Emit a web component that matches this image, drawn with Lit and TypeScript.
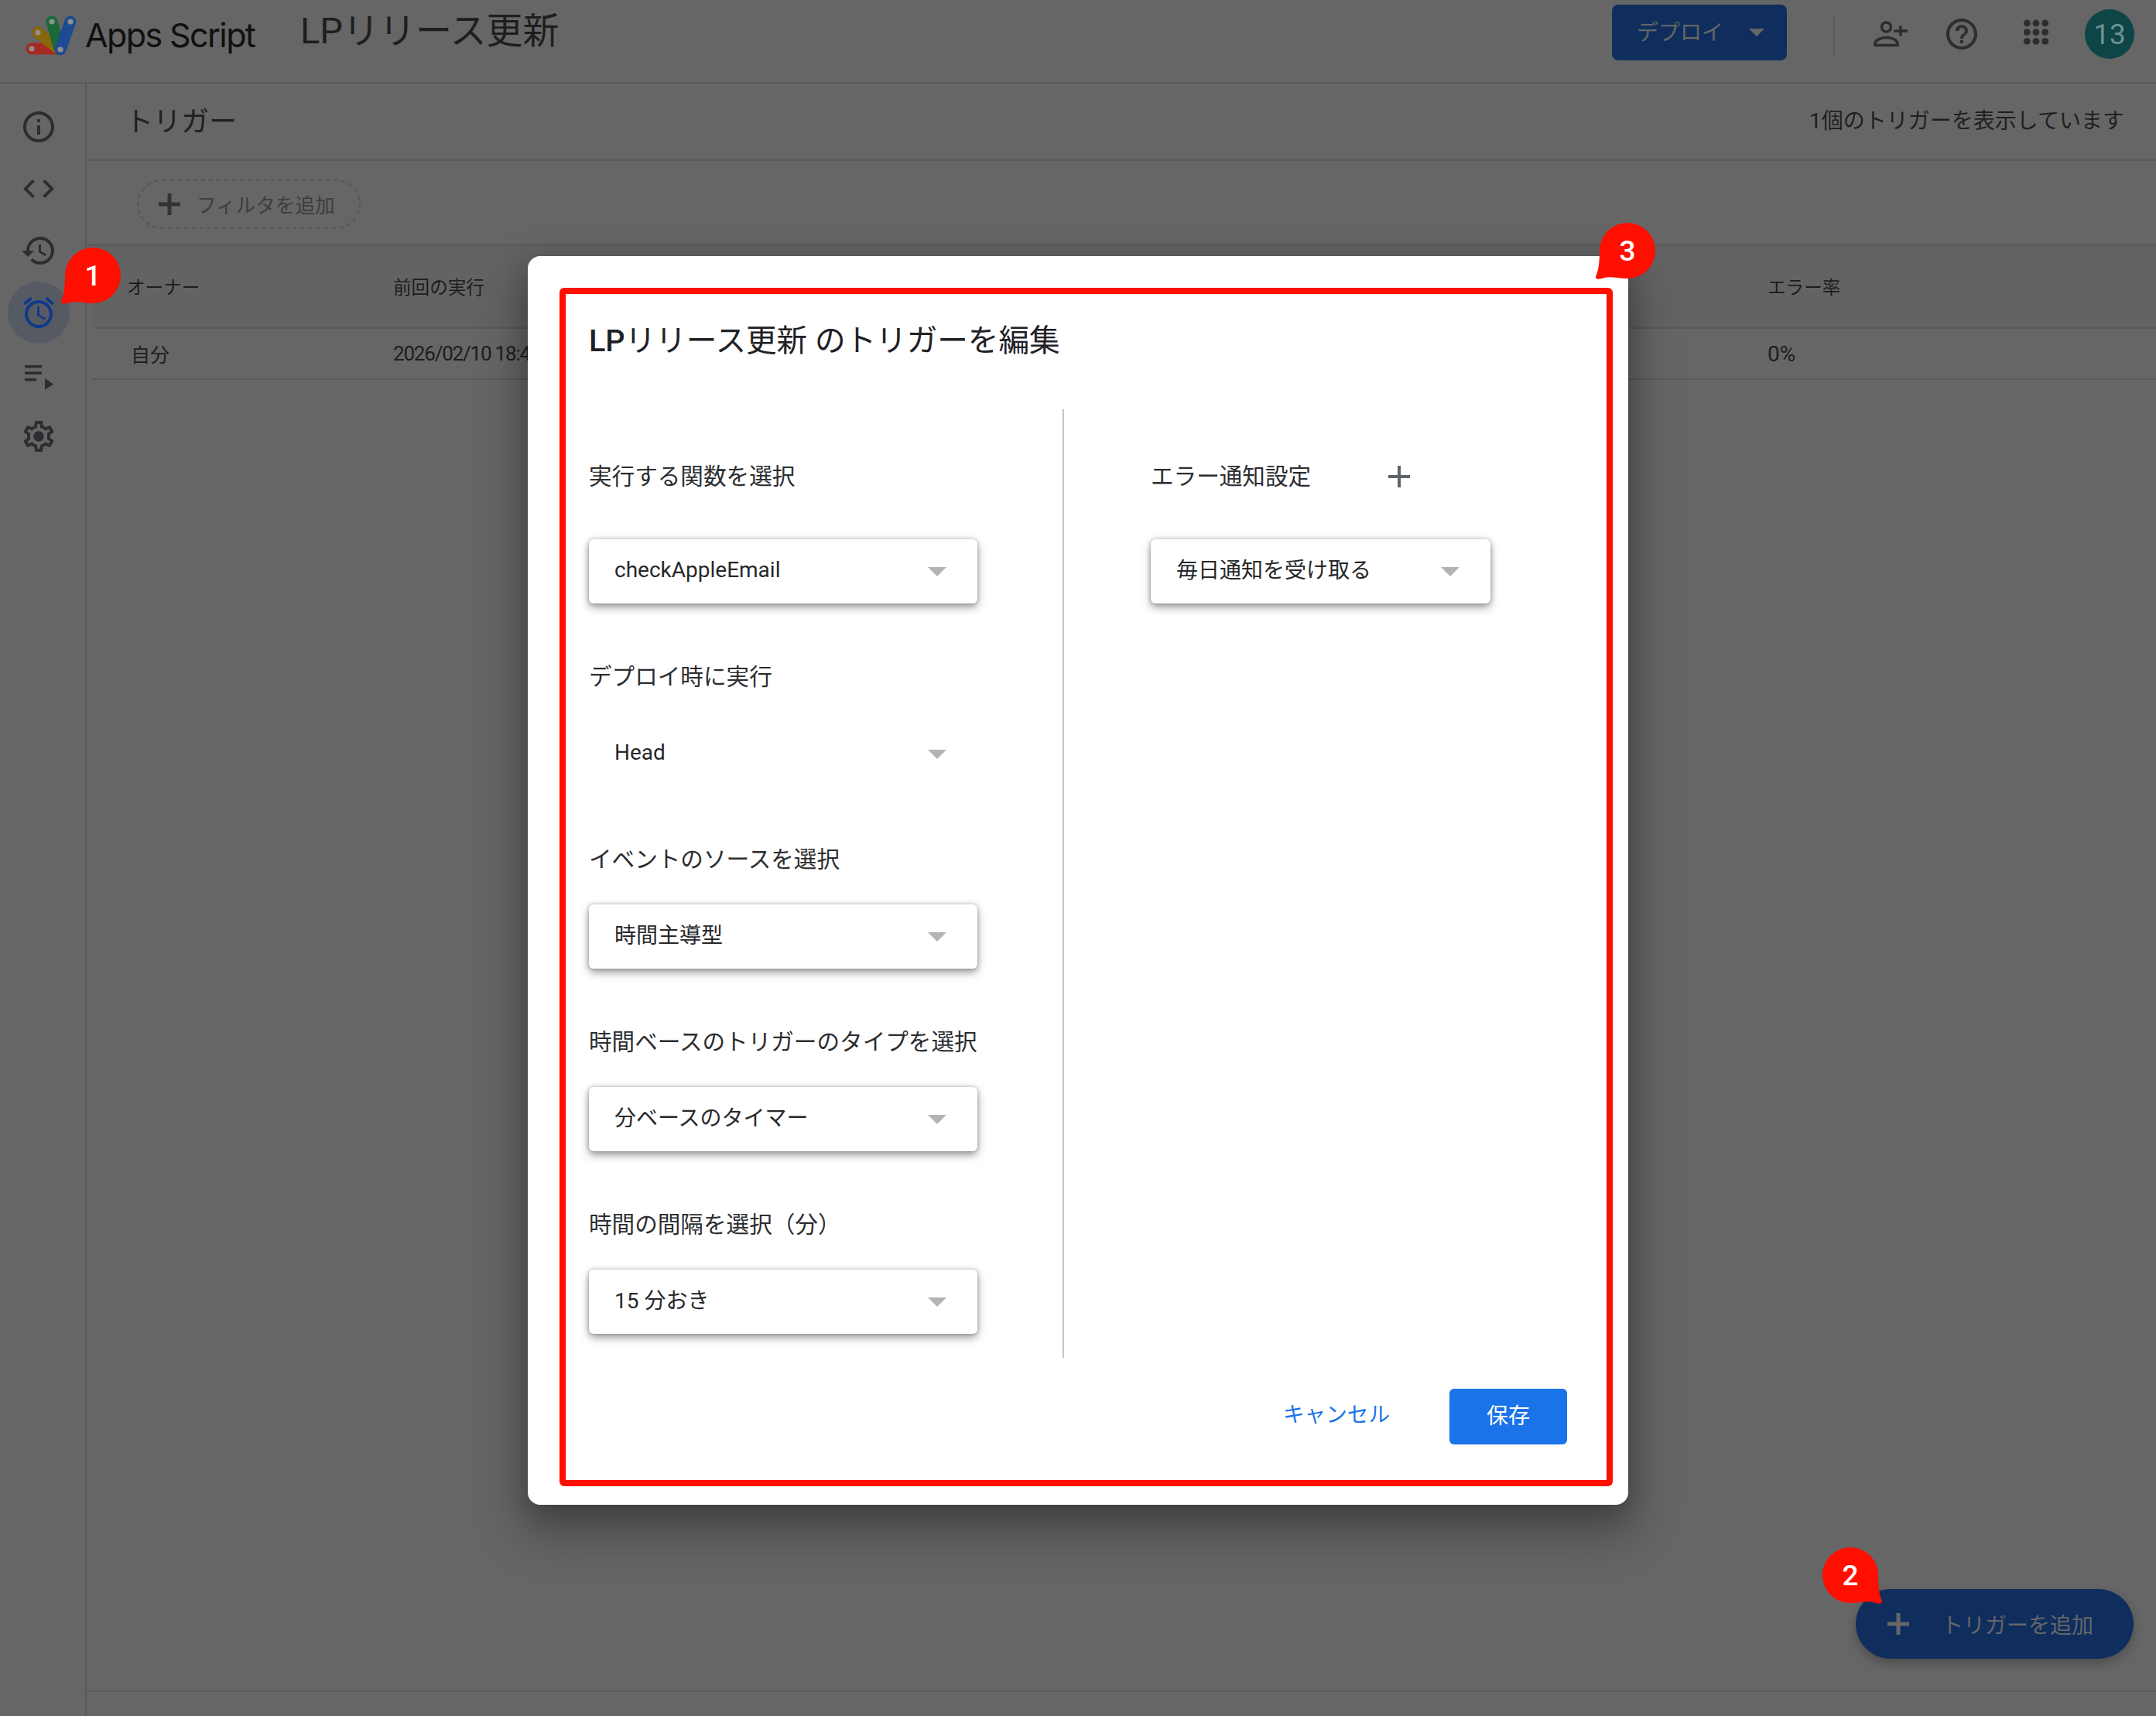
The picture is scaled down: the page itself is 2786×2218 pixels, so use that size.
import { html, css, LitElement, svg } from 'lit';
import { customElement } from 'lit/decorators.js';

const icon = (d: string, box = '0 0 24 24') => html`<svg viewBox=${box} width="48" height="48" fill="currentColor"><path d=${d}></path></svg>`;

const ICONS = {
  info: 'M11 7h2v2h-2zm0 4h2v6h-2zm1-9C6.48 2 2 6.48 2 12s4.48 10 10 10 10-4.48 10-10S17.52 2 12 2zm0 18c-4.41 0-8-3.59-8-8s3.59-8 8-8 8 3.59 8 8-3.59 8-8 8z',
  code: 'M9.4 16.6L4.8 12l4.6-4.6L8 6l-6 6 6 6 1.4-1.4zm5.2 0l4.6-4.6-4.6-4.6L16 6l6 6-6 6-1.4-1.4z',
  history: 'M13 3c-4.97 0-9 4.03-9 9H1l3.89 3.89.07.14L9 12H6c0-3.87 3.13-7 7-7s7 3.13 7 7-3.13 7-7 7c-1.93 0-3.68-.79-4.94-2.06l-1.42 1.42C8.27 19.99 10.51 21 13 21c4.97 0 9-4.03 9-9s-4.03-9-9-9zm-1 5v5l4.28 2.54.72-1.21-3.5-2.08V8H12z',
  alarm: 'M22 5.72l-4.6-3.86-1.29 1.53 4.6 3.86L22 5.72zM7.88 3.39L6.6 1.86 2 5.71l1.29 1.53 4.59-3.85zM12.5 8H11v6l4.75 2.85.75-1.23-4-2.37V8zM12 4c-4.97 0-9 4.03-9 9s4.03 9 9 9 9-4.03 9-9-4.03-9-9-9zm0 16c-3.87 0-7-3.13-7-7s3.13-7 7-7 7 3.13 7 7-3.13 7-7 7z',
  queue: 'M6 12h22v3.600H6zM6 20.500h22v3.600H6zM6 29h15v3.600H6zM32 29v15l11-7.500z',
  gear: 'M19.43 12.98c.04-.32.07-.64.07-.98s-.03-.66-.07-.98l2.11-1.65c.19-.15.24-.42.12-.64l-2-3.46c-.12-.22-.39-.3-.61-.22l-2.49 1c-.52-.4-1.08-.73-1.69-.98l-.38-2.65C14.46 2.18 14.25 2 14 2h-4c-.25 0-.46.18-.49.42l-.38 2.65c-.61.25-1.17.59-1.69.98l-2.49-1c-.23-.09-.49 0-.61.22l-2 3.46c-.13.22-.07.49.12.64l2.11 1.65c-.04.32-.07.65-.07.98s.03.66.07.98l-2.11 1.65c-.19.15-.24.42-.12.64l2 3.46c.12.22.39.3.61.22l2.49-1c.52.4 1.08.73 1.69.98l.38 2.65c.03.24.24.42.49.42h4c.25 0 .46-.18.49-.42l.38-2.65c.61-.25 1.17-.59 1.69-.98l2.49 1c.23.09.49 0 .61-.22l2-3.46c.12-.22.07-.49-.12-.64l-2.11-1.65zm-1.98-1.71c.04.31.05.52.05.73 0 .21-.02.43-.05.73l-.14 1.13.89.7 1.08.84-.7 1.21-1.27-.51-1.04-.42-.9.68c-.43.32-.84.56-1.25.73l-1.06.43-.16 1.13-.2 1.35h-1.4l-.19-1.35-.16-1.13-1.06-.43c-.43-.18-.83-.41-1.23-.71l-.91-.7-1.06.43-1.27.51-.7-1.21 1.08-.84.89-.7-.14-1.13c-.03-.31-.05-.54-.05-.74s.02-.43.05-.73l.14-1.13-.89-.7-1.08-.84.7-1.21 1.27.51 1.04.42.9-.68c.43-.32.84-.56 1.25-.73l1.06-.43.16-1.13.2-1.35h1.39l.19 1.35.16 1.13 1.06.43c.43.18.83.41 1.23.71l.91.7 1.06-.43 1.27-.51.7 1.21-1.07.85-.89.7.14 1.13zM12 8.6a3.4 3.4 0 1 0 0 6.8 3.4 3.4 0 0 0 0-6.8z',
  help: 'M11 18h2v-2h-2v2zm1-16C6.48 2 2 6.48 2 12s4.48 10 10 10 10-4.48 10-10S17.52 2 12 2zm0 18c-4.41 0-8-3.59-8-8s3.59-8 8-8 8 3.59 8 8-3.59 8-8 8zm0-14c-2.21 0-4 1.79-4 4h2c0-1.1.9-2 2-2s2 .9 2 2c0 2-3 1.75-3 5h2c0-2.25 3-2.5 3-5 0-2.21-1.79-4-4-4z',
};

const plus = (size: number, w: number) => html`<svg width=${size} height=${size} viewBox="0 0 28 28" fill="currentColor">
  <rect x=${14 - w / 2} y="0" width=${w} height="28"></rect><rect x="0" y=${14 - w / 2} width="28" height=${w}></rect>
</svg>`;

// annotation balloon, tail goes bottom-left unless flipped
const bubble = (n: number, cls: string) => html`<div class="bubble ${cls}">
  <svg viewBox="-44 -38 88 80" width="88" height="80"><path d="M0 -36A36 36 0 1 1 0 36C-12 36 -22 33 -30 35C-36 37 -42 38 -41 33C-37 26 -36 12 -36 0A36 36 0 0 1 0 -36Z"></path></svg>
  <span>${n}</span>
</div>`;

const logo = svg`
  <g fill="none" stroke-width="15" stroke-linecap="round">
    <path d="M41 63H76" stroke="#a32b22"></path>
    <path d="M49 42L74 62" stroke="#8a660c"></path>
    <path d="M67 28L76 60" stroke="#176a35"></path>
    <path d="M91 28L78 64" stroke="#1d4a92"></path>
  </g>
  <g fill="#8f8f8f">
    <circle cx="41" cy="63" r="3.6"></circle><circle cx="49" cy="42" r="3.6"></circle>
    <circle cx="67" cy="28" r="3.6"></circle><circle cx="91" cy="28" r="3.6"></circle><circle cx="78" cy="64" r="3.6"></circle>
  </g>`;

@customElement('app-root')
export class AppRoot extends LitElement {
  static styles = css`
    :host {
      display: block;
      position: relative;
      width: 2786px;
      height: 2218px;
      overflow: hidden;
      background: #666;
      color: #1c1c1c;
      font-family: Roboto, "Noto Sans CJK JP", sans-serif;
    }
    * { box-sizing: border-box; }

    .header {
      height: 108px;
      display: flex;
      align-items: center;
      border-bottom: 2px solid #5a5a5a;
      position: relative;
    }
    .logo { width: 110px; height: 106px; flex: none; }
    .brand {
      width: 278px;
      font: 400 43px Inter, Roboto, sans-serif;
      letter-spacing: -1.6px;
      color: #101010;
      padding-bottom: 16px;
    }
    .doc-title { font-size: 47px; color: #1e1e1e; padding-bottom: 36px; flex: 1; }
    .deploy {
      width: 226px;
      height: 72px;
      margin-bottom: 22px;
      border-radius: 8px;
      background: #0f2e5e;
      color: #666;
      display: flex;
      align-items: center;
      padding: 0 29px 0 32px;
      font-size: 28px;
      justify-content: space-between;
    }
    .deploy span { padding-bottom: 4px; }
    .caret { width: 0; height: 0; border-left: 12px solid transparent; border-right: 12px solid transparent; border-top: 12px solid #b3b3b3; }
    .deploy .caret { border-left-width: 10px; border-right-width: 10px; border-top-width: 10px; border-top-color: #666; }
    .vr { width: 2px; height: 53px; background: #5a5a5a; margin: 0 48px 16px 60px; }
    .tool { width: 48px; height: 48px; color: #2b2d30; margin-bottom: 18px; }
    .tool svg { display: block; }
    .help { margin-left: 44px; }
    .apps { margin-left: 48px; }
    .avatar {
      width: 64px;
      height: 64px;
      margin: 0 28px 18px 39px;
      border-radius: 50%;
      background: #0e4547;
      color: #6d9294;
      font-size: 37px;
      display: flex;
      align-items: center;
      justify-content: center;
    }

    .body { display: flex; height: 2110px; }
    .side {
      width: 112px;
      flex: none;
      border-right: 2px solid #5a5a5a;
      padding: 16px 0 0 10px;
      display: flex;
      flex-direction: column;
      align-items: flex-start;
      color: #2b2d30;
    }
    .side-item {
      width: 80px;
      height: 80px;
      flex: none;
      border-radius: 50%;
      display: flex;
      align-items: center;
      justify-content: center;
    }
    .side-item.on { background: #565b63; color: #10398a; }

    .main { flex: 1; display: flex; flex-direction: column; min-width: 0; }
    .sub {
      height: 100px;
      flex: none;
      padding: 0 41px 6px 50px;
      display: flex;
      align-items: center;
      justify-content: space-between;
      border-bottom: 2px solid #5a5a5a;
    }
    .sub h1 { margin: 0; font-size: 36px; font-weight: 400; color: #202020; }
    .sub span { font-size: 28px; color: #1f1f1f; }
    .filters {
      height: 110px;
      flex: none;
      padding: 24px 0 0 65px;
      border-bottom: 2px solid #5a5a5a;
    }
    .chip {
      width: 289px;
      height: 64px;
      border: 2px dashed #565656;
      border-radius: 32px;
      display: flex;
      align-items: center;
      gap: 21px;
      padding-left: 26px;
      color: #333;
      font-size: 25.6px;
    }
    .chip span { color: #3e3e3e; padding-bottom: 2px; }
    .table { margin-left: 8px; }
    .row {
      display: grid;
      grid-template-columns: 344px 1776px 1fr;
      align-items: center;
      border-bottom: 2px solid #5a5a5a;
      padding-left: 44px;
      font-size: 24px;
      color: #1d1d1d;
    }
    .row.head { height: 107px; background: #636363; font-size: 23.6px; padding-bottom: 2px; }
    .row.item { height: 66px; padding-left: 49px; grid-template-columns: 339px 1776px 1fr; padding-bottom: 0; font-size: 25px; }
    .row.item .date { font-size: 26px; letter-spacing: -1.2px; }
    .row.item .rate { font-size: 28px; }
    .grow { flex: 1; }
    .foot { height: 33px; flex: none; border-top: 2px solid #5a5a5a; }

    .fab {
      position: absolute;
      left: 2398px;
      top: 2054px;
      width: 359px;
      height: 90px;
      border-radius: 45px;
      background: #0f2e5e;
      color: #666;
      display: flex;
      align-items: center;
      padding-left: 41px;
      gap: 42px;
      font-size: 28px;
      box-shadow: 0 6px 14px rgba(0, 0, 0, .25);
    }

    .modal {
      position: absolute;
      left: 682px;
      top: 331px;
      width: 1422px;
      height: 1614px;
      padding: 41px 20px 24px 41px;
      background: #fff;
      border-radius: 16px;
      box-shadow: 0 30px 60px 10px rgba(0, 0, 0, .28), 0 10px 30px rgba(0, 0, 0, .18);
      color: #202124;
    }
    .frame {
      height: 100%;
      border: 8px solid #fe0f00;
      border-radius: 6px;
      display: flex;
      flex-direction: column;
    }
    .frame h2 {
      margin: 0;
      height: 149px;
      flex: none;
      padding: 38px 0 0 30px;
      font-size: 39.6px;
      line-height: 46px;
      font-weight: 400;
      color: #202124;
    }
    .frame h2 b { font-weight: 500; }
    .cols { display: flex; height: 1226px; flex: none; }
    .left { width: 644px; padding: 67px 0 0 30px; flex: none; border-right: 2px solid #c4c4c4; }
    .right { flex: 1; padding: 67px 0 0 112px; }
    .group { display: flex; flex-direction: column; gap: 40px; margin-bottom: 73px; }
    .group.first { gap: 61px; }
    .label { height: 40px; line-height: 40px; font-size: 29.6px; color: #2c2d30; display: flex; align-items: center; }
    .group:not(.first) .label { padding-top: 3px; }
    .label .add { margin-left: 100px; color: #5f6368; display: flex; }
    .field {
      height: 83px;
      width: 502px;
      border-radius: 6px;
      padding: 0 40px 0 33px;
      display: flex;
      align-items: center;
      justify-content: space-between;
      font-size: 28px;
      color: #27282b;
    }
    .field span { padding-bottom: 4px; }
    .field.jp span { padding-bottom: 7px; }
    .field.boxed { background: #fff; box-shadow: 0 5px 11px rgba(60, 64, 67, .5), 0 0 5px rgba(60, 64, 67, .35); }
    .field.narrow { width: 439px; }
    .actions {
      flex: 1;
      display: flex;
      justify-content: flex-end;
      padding: 40px 51px 0 0;
      gap: 77px;
    }
    .cancel { height: 72px; line-height: 68px; font-size: 27.6px; color: #1a73e8; }
    .save {
      width: 152px;
      height: 72px;
      border-radius: 6px;
      background: #1a73e8;
      color: #fff;
      font-size: 28px;
      display: flex;
      align-items: center;
      justify-content: center;
      padding-bottom: 6px;
    }

    .bubble { position: absolute; width: 88px; height: 80px; }
    .bubble svg { position: absolute; inset: 0; fill: #fe0f00; }
    .bubble span {
      position: absolute;
      inset: 0 0 4px 0;
      display: flex;
      align-items: center;
      justify-content: center;
      color: #fff;
      font: 500 37px Roboto, sans-serif;
    }
    .b1 { left: 76px; top: 318px; }
    .b2 { left: 2347px; top: 1998px; }
    .b2 svg { transform: scaleX(-1); }
    .b3 { left: 2059px; top: 286px; }
  `;

  field(text: string, boxed = true, narrow = false) {
    const jp = /[^\x00-\x7f]/.test(text);
    return html`<div class="field ${boxed ? 'boxed' : ''} ${narrow ? 'narrow' : ''} ${jp ? 'jp' : ''}"><span>${text}</span><i class="caret"></i></div>`;
  }

  render() {
    return html`
      <div class="header">
        <svg class="logo" viewBox="0 0 110 106">${logo}</svg>
        <div class="brand">Apps Script</div>
        <div class="doc-title">LPリリース更新</div>
        <div class="deploy"><span>デプロイ</span><i class="caret"></i></div>
        <div class="vr"></div>
        <div class="tool">
          <svg viewBox="0 0 48 48" width="48" height="48" fill="none" stroke="currentColor">
            <circle cx="18.5" cy="15" r="6" stroke-width="3.6"></circle>
            <path d="M4 38.500v-2c0-5 8-8 14.500-8s14.500 3 14.500 8v2z" stroke-width="3.6"></path>
            <path d="M28 20h18M37 13.500v13" stroke-width="3.6"></path>
          </svg>
        </div>
        <div class="tool help">${icon(ICONS.help)}</div>
        <div class="tool apps">
          <svg viewBox="0 0 48 48" width="48" height="48" fill="currentColor">
            ${[10, 21.7, 33.4].map(y => [12.3, 24, 35.7].map(x => svg`<circle cx=${x} cy=${y} r="4.4"></circle>`))}
          </svg>
        </div>
        <div class="avatar">13</div>
      </div>

      <div class="body">
        <nav class="side">
          <div class="side-item">${icon(ICONS.info)}</div>
          <div class="side-item">${icon(ICONS.code)}</div>
          <div class="side-item">${icon(ICONS.history)}</div>
          <div class="side-item on">${icon(ICONS.alarm)}</div>
          <div class="side-item">${icon(ICONS.queue, '0 0 48 48')}</div>
          <div class="side-item">${icon(ICONS.gear)}</div>
        </nav>
        <main class="main">
          <div class="sub"><h1>トリガー</h1><span>1個のトリガーを表示しています</span></div>
          <div class="filters">
            <div class="chip">${plus(28, 5)}<span>フィルタを追加</span></div>
          </div>
          <div class="table">
            <div class="row head"><div>オーナー</div><div>前回の実行</div><div>エラー率</div></div>
            <div class="row item"><div>自分</div><div class="date">2026/02/10 18:45</div><div class="rate">0%</div></div>
          </div>
          <div class="grow"></div>
          <div class="foot"></div>
        </main>
      </div>

      <div class="fab">${plus(28, 5)}<span>トリガーを追加</span></div>

      <section class="modal">
        <div class="frame">
          <h2><b>LP</b>リリース更新 のトリガーを編集</h2>
          <div class="cols">
            <div class="left">
              <div class="group first"><div class="label">実行する関数を選択</div>${this.field('checkAppleEmail')}</div>
              <div class="group"><div class="label">デプロイ時に実行</div>${this.field('Head', false)}</div>
              <div class="group"><div class="label">イベントのソースを選択</div>${this.field('時間主導型')}</div>
              <div class="group"><div class="label">時間ベースのトリガーのタイプを選択</div>${this.field('分ベースのタイマー')}</div>
              <div class="group"><div class="label">時間の間隔を選択（分）</div>${this.field('15 分おき')}</div>
            </div>
            <div class="right">
              <div class="group first">
                <div class="label">エラー通知設定<span class="add">${plus(28, 4)}</span></div>
                ${this.field('毎日通知を受け取る', true, true)}
              </div>
            </div>
          </div>
          <div class="actions">
            <div class="cancel">キャンセル</div>
            <div class="save">保存</div>
          </div>
        </div>
      </section>

      ${bubble(1, 'b1')}
      ${bubble(2, 'b2')}
      ${bubble(3, 'b3')}
    `;
  }
}
